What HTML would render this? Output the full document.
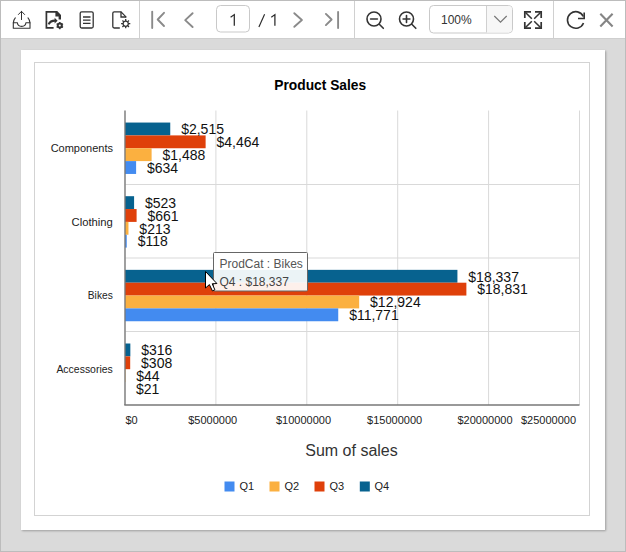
<!DOCTYPE html>
<html><head><meta charset="utf-8">
<style>
html,body{margin:0;padding:0;}
body{width:626px;height:552px;position:relative;overflow:hidden;background:#dadada;font-family:"Liberation Sans",sans-serif;}
#frame{position:absolute;left:0;top:0;width:624px;height:550px;border:1px solid #bcbcbc;}
#toolbar{position:absolute;left:1px;top:1px;width:624px;height:37px;background:#fff;border-bottom:1px solid #cfcfcf;}
#page{position:absolute;left:21px;top:50px;width:584px;height:480px;background:#fff;box-shadow:1px 1px 2px rgba(0,0,0,0.28);}
#chartbox{position:absolute;left:34px;top:62px;width:554px;height:452px;border:1px solid #d3d3d3;}
svg{position:absolute;left:0;top:0;}
.dl text{font-size:14px;fill:#111;}
</style></head><body>
<div id="frame"></div>
<div id="toolbar"></div>
<div id="page"></div>
<div id="chartbox"></div>
<svg width="626" height="552" viewBox="0 0 626 552">
<!-- toolbar separators -->
<g stroke="#d0d0d0" stroke-width="1">
<line x1="139.5" y1="1" x2="139.5" y2="38"/>
<line x1="354.5" y1="1" x2="354.5" y2="38"/>
<line x1="553.5" y1="1" x2="553.5" y2="38"/>
</g>
<!-- export icon -->
<g fill="none" stroke="#333" stroke-width="1.1" stroke-linecap="round" stroke-linejoin="round">
<path d="M21.5 11.3V19.6M18.4 14.5L21.5 11.3L24.6 14.5" stroke-width="1"/>
<path d="M15.3 17.8Q13.3 20 13.3 23V28.3H30V23Q30 20 28 17.8"/>
<path d="M13.3 22.8H17.4C17.6 27.6 25.7 27.6 25.9 22.8H30"/>
</g>
<!-- publish icon -->
<g fill="none" stroke="#333" stroke-width="1.7">
<path d="M56 11.9H46.4V27.8H53.6"/>
</g>
<path d="M55.4 11.05H57.2L61 15V19.6H58.6V16.4H55.4Z" fill="#333"/>
<path d="M48.6 24.4Q50.3 20.6 55 20.6" fill="none" stroke="#333" stroke-width="2.1"/>
<path d="M54.6 17.8L57.6 20.7L54.6 23.6Z" fill="#333"/>
<g transform="translate(59.8,25.6)"><circle r="2.2" fill="none" stroke="#333" stroke-width="1.7"/><path d="M0 -3.7V3.7M-3.2 -1.85L3.2 1.85M-3.2 1.85L3.2 -1.85" stroke="#333" stroke-width="1.4"/><circle r="1.0" fill="#fff"/></g>
<!-- doc lines icon -->
<rect x="80.2" y="11.8" width="13" height="16.2" rx="1.5" fill="none" stroke="#333" stroke-width="1.3"/>
<path d="M83 17H90.5M83 20.2H90.5M83 23.4H90.5" stroke="#333" stroke-width="1.3"/>
<!-- doc gear icon -->
<path d="M119.8 28H114.2Q112.8 28 112.8 26.6V13.2Q112.8 11.8 114.2 11.8H121L126 16.9V17.5" fill="none" stroke="#333" stroke-width="1.3"/>
<path d="M121 11.8V17H126" fill="none" stroke="#333" stroke-width="1.3"/>
<g transform="translate(125.7,23.7)"><circle r="2.6" fill="none" stroke="#333" stroke-width="1.3"/><path d="M0 -4.6V-2.6M0 2.6V4.6M-4.6 0H-2.6M2.6 0H4.6M-3.25 -3.25L-1.85 -1.85M1.85 1.85L3.25 3.25M-3.25 3.25L-1.85 1.85M1.85 -1.85L3.25 -3.25" stroke="#333" stroke-width="1.3"/></g>
<!-- nav -->
<g fill="none" stroke="#8a8a8a" stroke-width="1.9" stroke-linecap="round" stroke-linejoin="round">
<path d="M152.2 11.8V28"/>
<path d="M164 12.8L157.7 19.5L164 26"/>
<path d="M192.6 13.2L185.2 20.1L192.6 27"/>
<path d="M294.3 13.2L301.9 20L294.3 26.8"/>
<path d="M325.9 13.9L331.6 19.5L325.9 25.1"/>
<path d="M338.1 12V28"/>
</g>
<!-- page input -->
<rect x="216.5" y="5.5" width="33" height="26.5" rx="4" fill="#fff" stroke="#c9c9c9"/>
<path d="M230.6 17.2L234.3 14.6V25.7" fill="none" stroke="#2a2a2a" stroke-width="1.25"/>
<path d="M258.9 27.1L264.6 14.3" fill="none" stroke="#2a2a2a" stroke-width="1.15"/><path d="M271.3 17.2L274.9 14.6V25.7" fill="none" stroke="#2a2a2a" stroke-width="1.25"/>
<!-- zoom icons -->
<g fill="none" stroke="#333" stroke-width="1.6" stroke-linecap="round">
<circle cx="374" cy="19" r="7"/>
<path d="M370.6 19H377.4M379.3 24.3L383.3 28.3"/>
<circle cx="406.5" cy="19" r="7"/>
<path d="M403.1 19H409.9M406.5 15.6V22.4M411.8 24.3L415.8 28.3"/>
</g>
<!-- zoom dropdown -->
<rect x="429.5" y="5.5" width="83" height="27.5" rx="4" fill="#fff" stroke="#c9c9c9"/>
<path d="M486.5 6V32.5H508.5Q512 32.5 512 29V9Q512 6 508.5 6Z" fill="#f7f7f7"/>
<line x1="486.5" y1="6" x2="486.5" y2="32.5" stroke="#d0d0d0"/>
<text x="441" y="24" font-size="12" fill="#333">100%</text>
<path d="M494.3 16L500.5 22.2L506.7 16" fill="none" stroke="#777" stroke-width="1.2"/>
<!-- fit page icon -->
<g fill="none" stroke="#333" stroke-width="1.7">
<path d="M524.8 18V11.8H531M535 11.8H541.2V18M541.2 22V28.2H535M531 28.2H524.8V22"/>
<path d="M525.5 12.5L531.8 18.8M540.5 12.5L534.2 18.8M540.5 27.5L534.2 21.2M525.5 27.5L531.8 21.2" stroke-width="1.5"/>
</g>
<!-- refresh -->
<g transform="translate(-1,0)"><path d="M584.3 16.5A8.3 8.3 0 1 0 584.5 23" fill="none" stroke="#333" stroke-width="1.6"/>
<path d="M579 18.5H585.2V12.4" fill="none" stroke="#333" stroke-width="1.6"/></g>
<!-- close -->
<path d="M600.3 13.8L612.6 26.4M612.6 13.8L600.3 26.4" stroke="#858585" stroke-width="2.1"/>

<!-- chart -->
<text x="0" y="0" font-size="15" font-weight="bold" fill="#000" text-anchor="middle" transform="translate(320.2,89.7) scale(0.92,1)">Product Sales</text>
<g stroke="#d9d9d9" stroke-width="1">
<line x1="125" y1="110.5" x2="125" y2="405"/>
<line x1="215.9" y1="110.5" x2="215.9" y2="405"/>
<line x1="306.8" y1="110.5" x2="306.8" y2="405"/>
<line x1="397.7" y1="110.5" x2="397.7" y2="405"/>
<line x1="488.6" y1="110.5" x2="488.6" y2="405"/>
<line x1="579.5" y1="110.5" x2="579.5" y2="405"/>
<line x1="125" y1="184.5" x2="579.5" y2="184.5"/>
<line x1="125" y1="258" x2="579.5" y2="258"/>
<line x1="125" y1="331.5" x2="579.5" y2="331.5"/>
</g>
<rect x="125.0" y="122.55" width="45.25" height="12.85" fill="#07628f"/>
<rect x="125.0" y="135.40" width="80.62" height="12.85" fill="#df400a"/>
<rect x="125.0" y="148.25" width="26.61" height="12.85" fill="#fbb040"/>
<rect x="125.0" y="161.10" width="11.11" height="12.85" fill="#438bf0"/>
<rect x="125.0" y="196.20" width="9.09" height="12.85" fill="#07628f"/>
<rect x="125.0" y="209.05" width="11.60" height="12.85" fill="#df400a"/>
<rect x="125.0" y="221.90" width="3.47" height="12.85" fill="#fbb040"/>
<rect x="125.0" y="234.75" width="1.74" height="12.85" fill="#438bf0"/>
<rect x="125.0" y="269.85" width="332.42" height="12.85" fill="#07628f"/>
<rect x="125.0" y="282.70" width="341.38" height="12.85" fill="#df400a"/>
<rect x="125.0" y="295.55" width="234.17" height="12.85" fill="#fbb040"/>
<rect x="125.0" y="308.40" width="213.24" height="12.85" fill="#438bf0"/>
<rect x="125.0" y="343.50" width="5.34" height="12.85" fill="#07628f"/>
<rect x="125.0" y="356.35" width="5.19" height="12.85" fill="#df400a"/>
<rect x="125.0" y="369.20" width="0.40" height="12.85" fill="#fbb040"/>
<rect x="125.0" y="382.05" width="0.00" height="12.85" fill="#438bf0"/>
<g stroke="#777" stroke-width="1.3">
<line x1="125" y1="110.5" x2="125" y2="405"/>
<line x1="124.3" y1="405" x2="579.5" y2="405"/>
</g>
<g font-size="11" fill="#222" text-anchor="end">
<text x="113" y="152">Components</text>
<text x="112.8" y="225.5" textLength="41.3" lengthAdjust="spacingAndGlyphs">Clothing</text>
<text x="112.8" y="299" textLength="25" lengthAdjust="spacingAndGlyphs">Bikes</text>
<text x="112.8" y="372.5" textLength="56.4" lengthAdjust="spacingAndGlyphs">Accessories</text>
</g>
<g font-size="11" fill="#222">
<text x="125.5" y="424">$0</text>
<text x="212.7" y="424" text-anchor="middle">$5000000</text>
<text x="303.5" y="424" text-anchor="middle">$10000000</text>
<text x="394.6" y="424" text-anchor="middle">$15000000</text>
<text x="485" y="424" text-anchor="middle">$20000000</text>
<text x="576" y="424" text-anchor="end">$25000000</text>
</g>
<text x="351.5" y="456.2" font-size="16" fill="#333" text-anchor="middle">Sum of sales</text>
<g class="dl">
<text x="181.15" y="134.22">$2,515</text>
<text x="216.52" y="147.08">$4,464</text>
<text x="162.51" y="159.93">$1,488</text>
<text x="147.01" y="172.78">$634</text>
<text x="144.99" y="207.88">$523</text>
<text x="147.50" y="220.72">$661</text>
<text x="139.37" y="233.57">$213</text>
<text x="137.64" y="246.42">$118</text>
<text x="468.32" y="281.53">$18,337</text>
<text x="477.28" y="294.38">$18,831</text>
<text x="370.07" y="307.23">$12,924</text>
<text x="349.14" y="320.08">$11,771</text>
<text x="141.24" y="355.18">$316</text>
<text x="141.09" y="368.03">$308</text>
<text x="136.30" y="380.88">$44</text>
<text x="135.88" y="393.73">$21</text>
</g>
<!-- legend -->
<rect x="224.5" y="481.5" width="10" height="10" fill="#438bf0"/>
<rect x="269.5" y="481.5" width="10" height="10" fill="#fbb040"/>
<rect x="314.5" y="481.5" width="10" height="10" fill="#df400a"/>
<rect x="359.8" y="481.5" width="10" height="10" fill="#07628f"/>
<g font-size="11" fill="#222">
<text x="239.5" y="490">Q1</text>
<text x="284.5" y="490">Q2</text>
<text x="329.5" y="490">Q3</text>
<text x="374.5" y="490">Q4</text>
</g>
<!-- tooltip -->
<rect x="213.5" y="252.5" width="94" height="38.5" rx="1" fill="rgba(255,255,255,0.92)" stroke="#666" stroke-width="1"/>
<text x="219.5" y="268" font-size="12" fill="#555">ProdCat : Bikes</text>
<text x="219.5" y="285.8" font-size="12" fill="#444">Q4 : $18,337</text>
<!-- cursor -->
<path d="M205.5 271.5V288L209.4 284.6L212.4 290.9L214.9 289.8L212.2 283.8L216.9 283.5Z" fill="#fff" stroke="#000" stroke-width="1" stroke-linejoin="miter"/>
</svg>
</body></html>
